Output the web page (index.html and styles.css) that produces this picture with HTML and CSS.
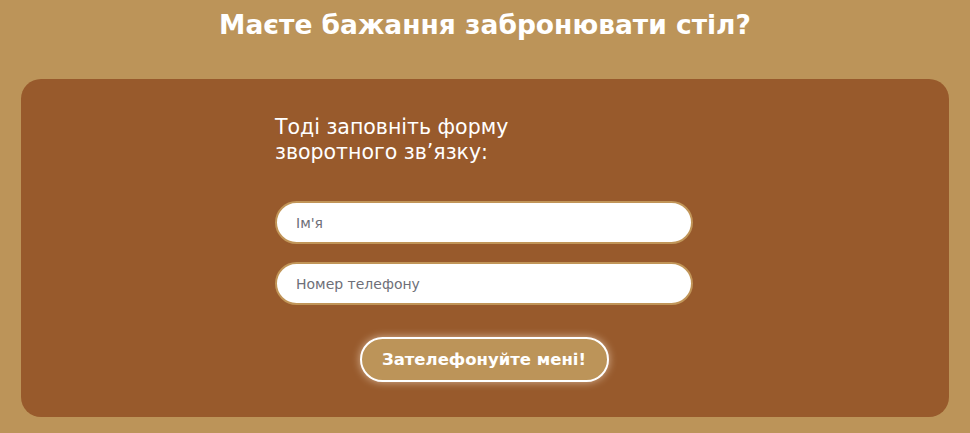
FILE: index.html
```html
<!DOCTYPE html>
<html lang="uk">
<head>
<meta charset="utf-8">
<link rel="stylesheet" href="styles.css">
</head>
<body>
<section class="booking">
  <h2 class="booking-title">Маєте бажання забронювати стіл?</h2>
  <div class="card">
    <form class="form">
      <p class="form-lead">Тоді заповніть форму<br>зворотного зв’язку:</p>
      <input class="field" type="text" placeholder="Ім'я">
      <input class="field" type="tel" placeholder="Номер телефону">
      <div class="actions">
        <button class="btn" type="button">Зателефонуйте мені!</button>
      </div>
    </form>
  </div>
</section>
</body>
</html>
```
FILE: styles.css
```css
* { box-sizing: border-box; }
html, body { margin: 0; padding: 0; }
body {
  background: #bc9459;
  font-family: "DejaVu Sans", "Open Sans", sans-serif;
  height: 433px;
  overflow: hidden;
}
.booking {
  padding: 8px 21px 0 21px;
}
.booking-title {
  margin: 0;
  text-align: center;
  color: #fff;
  font-size: 26.5px;
  font-weight: 700;
  line-height: 33px;
  letter-spacing: 0;
}
.card {
  margin-top: 38px;
  background: #985a2c;
  border-radius: 20px;
  height: 338px;
  padding: 35px 0 0 254px;
}
.form {
  width: 418px;
  display: flex;
  flex-direction: column;
}
.form-lead {
  margin: 0 0 36px 0;
  color: #fff;
  font-size: 20.5px;
  font-weight: 500;
  line-height: 25px;
  padding-top: 1px;
}
.field {
  height: 43px;
  border: 2px solid #c19558;
  border-radius: 22px;
  background: #fff;
  padding: 0 19px;
  font-family: "DejaVu Sans", sans-serif;
  font-size: 14px;
  color: #333;
  margin-bottom: 18px;
  outline: none;
}
.field::placeholder { color: #6e6f78; }
.actions {
  display: flex;
  justify-content: center;
  padding-top: 14px;
}
.btn {
  width: 249px;
  height: 45px;
  border: 2px solid #fff;
  border-radius: 23px;
  background: #bc9459;
  color: #fff;
  font-family: "DejaVu Sans", sans-serif;
  font-size: 16.5px;
  font-weight: 700;
  box-shadow: 0 0 8px rgba(255, 240, 220, 0.6);
  cursor: pointer;
}
```
